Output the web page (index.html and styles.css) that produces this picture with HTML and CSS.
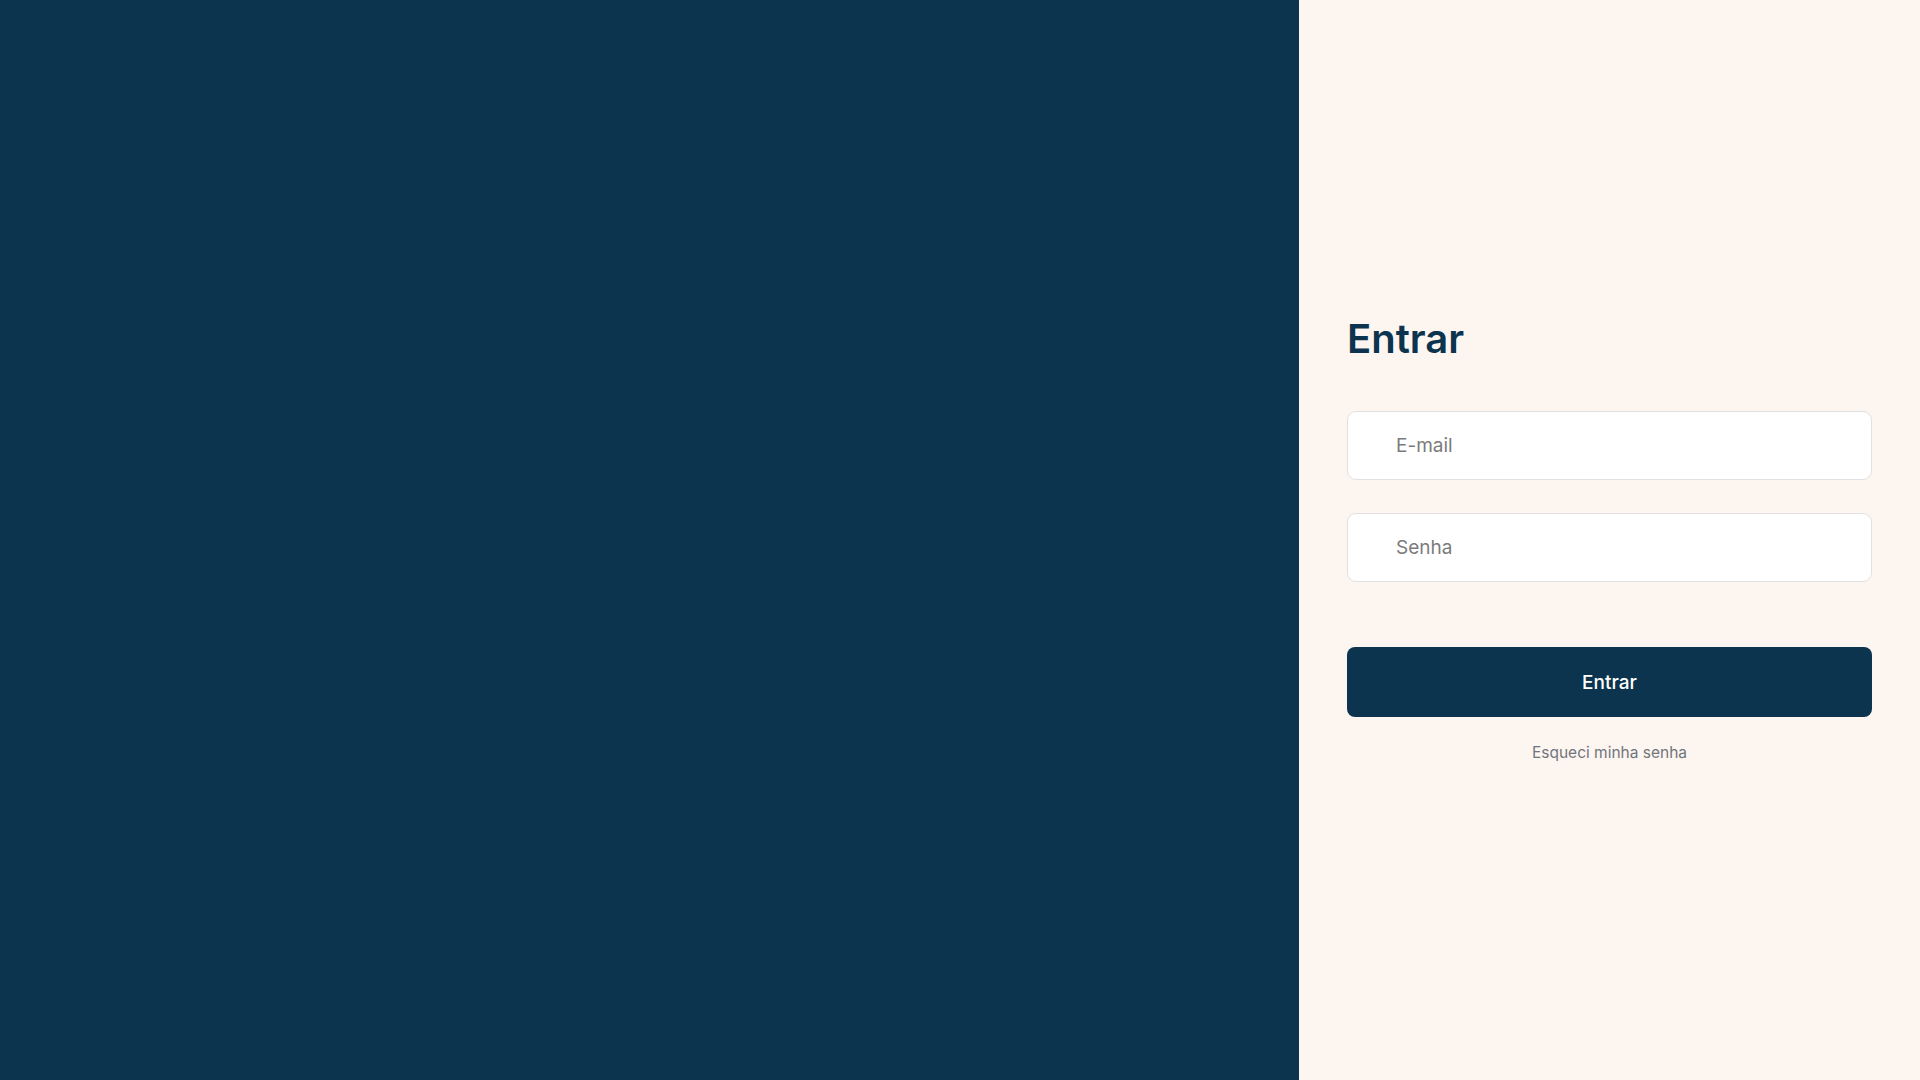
FILE: index.html
```html
<!DOCTYPE html>
<html lang="pt-BR">
<head>
<meta charset="utf-8">
<title>Entrar</title>
<link rel="stylesheet" href="styles.css">
</head>
<body>
<div class="page">
  <aside class="brand"></aside>
  <main class="auth">
    <form class="form">
      <h1 class="title">Entrar</h1>
      <div class="fields">
        <input class="field" type="email" placeholder="E-mail">
        <input class="field" type="password" placeholder="Senha">
      </div>
      <button class="submit" type="button">Entrar</button>
      <a class="forgot" href="#">Esqueci minha senha</a>
    </form>
  </main>
</div>
</body>
</html>
```

FILE: styles.css
```css
* { box-sizing: border-box; }
html, body { margin: 0; height: 100%; }
body {
  font-family: Inter, "Noto Sans", "Liberation Sans", sans-serif;
  background: #fdf5f0;
}
.page {
  display: flex;
  height: 100vh;
}
.brand {
  flex: 1;
  background: #0c344e;
}
.auth {
  width: 621px;
  background: #fdf5f0;
  display: flex;
  flex-direction: column;
  justify-content: center;
  padding: 0 48px 1px 48px;
}
.form {
  display: flex;
  flex-direction: column;
}
.title {
  margin: 0 0 48px 0;
  font-size: 40px;
  line-height: 48px;
  font-weight: 600;
  color: #0c344e;
}
.fields {
  display: flex;
  flex-direction: column;
  gap: 33px;
}
.field {
  height: 69px;
  width: 100%;
  border: 1px solid #e1e1e4;
  border-radius: 9px;
  background: #ffffff;
  padding: 0 16px 0 48px;
  font-family: inherit;
  font-size: 19px;
  color: #333;
  outline: none;
}
.field::placeholder { color: #7b7b7b; }
.submit {
  margin-top: 65px;
  height: 70px;
  width: 100%;
  border: none;
  border-radius: 8px;
  background: #0c344e;
  color: #ffffff;
  font-family: inherit;
  font-size: 19px;
  font-weight: 500;
  cursor: pointer;
}
.forgot {
  margin-top: 25px;
  align-self: center;
  font-size: 15.5px;
  line-height: 22px;
  color: #71757d;
  text-decoration: none;
}
```
